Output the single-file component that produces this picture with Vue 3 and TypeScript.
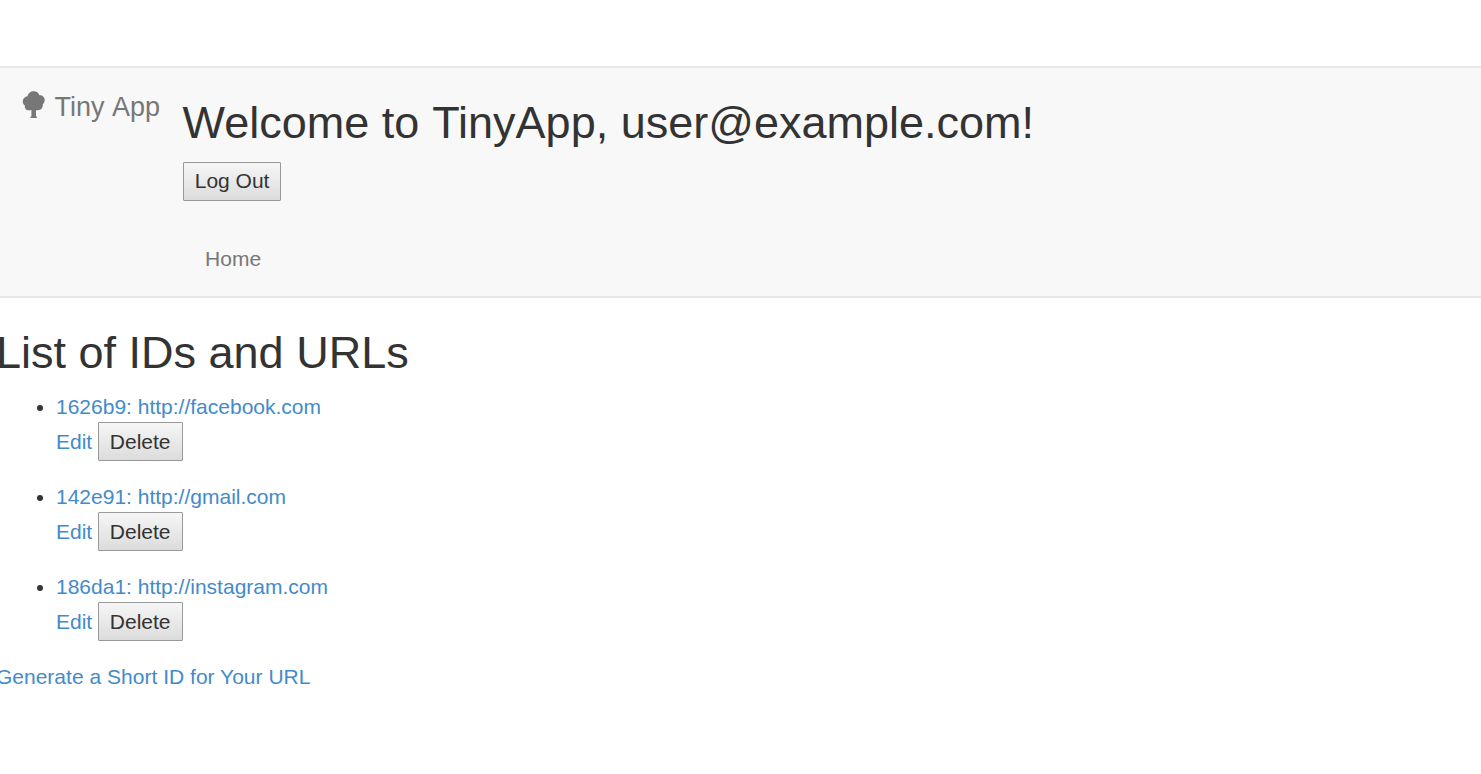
<script setup lang="ts">
interface ShortUrl {
  id: string
  url: string
}

const userEmail = 'user@example.com'
const urls: ShortUrl[] = [
  { id: '1626b9', url: 'http://facebook.com' },
  { id: '142e91', url: 'http://gmail.com' },
  { id: '186da1', url: 'http://instagram.com' },
]
</script>

<template>
  <div class="page">
    <nav class="navbar">
      <a class="brand">
        <svg class="tree" viewBox="-0.7 0 23 27" aria-hidden="true">
          <path
            d="M11 .2C13.8 .2 16 1.8 16.8 4.3C19.8 4.1 22 6.3 22 9C22 10.9 21.2 12.3 20 13.3C20.6 16.5 18.4 19.3 15.3 19.3H13.3V25.2L14.3 26V27H7.7V26L8.7 25.2V19.3H6C3.2 19.3 1.6 17 2.2 14.5C.8 13.6 0 12.2 0 10.5C0 7.6 2.2 5.6 4.8 5.3C5.3 2.3 7.9 .2 11 .2Z"
          />
        </svg>
        <span>Tiny App</span>
      </a>
      <div class="nav-content">
        <h2>Welcome to <span class="name">TinyApp</span>, {{ userEmail }}!</h2>
        <button class="btn logout" type="button">Log Out</button>
        <a class="home">Home</a>
      </div>
    </nav>
    <main>
      <h2>List of IDs and URLs</h2>
      <ul class="urls">
        <li v-for="item in urls" :key="item.id">
          <a class="link">{{ item.id }}: {{ item.url }}</a>
          <div class="actions">
            <a class="link">Edit</a>
            <button class="btn delete" type="button">Delete</button>
          </div>
        </li>
      </ul>
      <a class="link generate">Generate a Short ID for Your URL</a>
    </main>
  </div>
</template>

<style>
body {
  margin: 0;
  background: #fff;
  overflow: hidden;
}
</style>

<style scoped>
.page {
  box-sizing: border-box;
  height: 774px;
  padding-top: 66px;
  margin-left: -4px;
  overflow: hidden;
  color: #333;
  font: 21px/30px "Liberation Sans", Arial, sans-serif;
}
.navbar {
  box-sizing: border-box;
  display: flex;
  align-items: flex-start;
  height: 232px;
  margin-right: -8px;
  border: 2px solid #e7e7e7;
  border-radius: 6px;
  background: #f8f8f8;
}
.brand {
  box-sizing: border-box;
  display: flex;
  width: 184.6px;
  padding: 24px 0 22.5px 24px;
  color: #777;
  font-size: 27px;
  word-spacing: 1.5px;
  white-space: nowrap;
}
.tree {
  width: 23px;
  height: 27px;
  margin: -1px 9.5px 0 0;
  fill: currentColor;
}
.nav-content {
  display: flex;
  flex-direction: column;
  align-items: flex-start;
}
h2 {
  margin: 30px 0 15px;
  font-size: 45px;
  font-weight: 500;
  line-height: 49px;
}
.name {
  margin-left: 0.4px;
}
.btn {
  box-sizing: border-box;
  height: 39px;
  padding: 0 11px;
  border: 1px solid #999;
  border-radius: 1px;
  background: linear-gradient(#f6f6f6, #dcdcdc);
  color: #333;
  font: inherit;
  line-height: 36px;
}
.logout {
  width: 98px;
  padding: 0 9px 1px 10px;
}
.delete {
  padding: 1px 11.4px 0 10.6px;
}
.home {
  margin: 43px 0 0 22.5px;
  color: #777;
}
.link {
  color: #428bca;
}
.generate {
  word-spacing: 0.07px;
}
.urls {
  margin: 0;
  padding-left: 60px;
}
.urls li {
  height: 90px;
}
.actions {
  display: flex;
  align-items: center;
  gap: 6px;
  height: 39px;
}
</style>
